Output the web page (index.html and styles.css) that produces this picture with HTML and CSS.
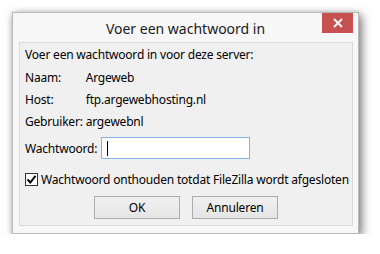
FILE: index.html
```html
<!DOCTYPE html>
<html lang="nl">
<head>
  <meta charset="UTF-8" />
  <title>Voer een wachtwoord in</title>
  <link rel="stylesheet" href="styles.css">
</head>
<body>

<div class="window">
  <div class="titlebar">
    <span class="title">Voer een wachtwoord in</span>
    <button class="close-btn" title="Sluiten">
      <svg width="10" height="10" viewBox="0 0 10 10">
        <path d="M1 1 L9 9 M9 1 L1 9" stroke="#fff" stroke-width="1.8" />
      </svg>
    </button>
  </div>

  <div class="panel">
    <div class="row">Voer een wachtwoord in voor deze server:</div>
    <div class="info">
      <span>Naam:</span><span>Argeweb</span>
      <span>Host:</span><span>ftp.argewebhosting.nl</span>
      <span>Gebruiker:</span><span>argewebnl</span>
    </div>

    <div class="pass-row">
      <label for="pass">Wachtwoord:</label>
      <div class="input" id="pass"><span class="caret"></span></div>
    </div>

    <div class="check-row">
      <span class="checkbox">
        <svg width="11" height="11" viewBox="0 0 11 11">
          <path d="M1.5 5.5 L4.3 8.5 L9.5 1.8" fill="none" stroke="#000" stroke-width="2" />
        </svg>
      </span>
      <span>Wachtwoord onthouden totdat FileZilla wordt afgesloten</span>
    </div>

    <div class="buttons">
      <button class="btn">OK</button>
      <button class="btn">Annuleren</button>
    </div>
  </div>
</div>

</body>
</html>
```

FILE: styles.css
```css
body {
  margin: 0;
  padding: 12px 0 0 12px;
  background: #fff;
  font-family: 'Noto Sans', 'Open Sans', sans-serif;
  font-size: 12px;
  letter-spacing: -0.2px;
  color: #000;
  white-space: nowrap;
}
.window {
  position: relative;
  width: 345px;
  height: 220px;
  background: #f7f7f7;
  border: 1px solid #b9b9b9;
  box-shadow: 3px 3px 9px rgba(0,0,0,0.5), -1px 0 5px rgba(0,0,0,0.12);
  display: flex;
  flex-direction: column;
}
.titlebar {
  height: 29px;
  display: flex;
  justify-content: center;
  align-items: center;
}
.title {
  font-size: 14px;
  letter-spacing: 0;
  color: #1a1a1a;
  margin-top: 1px;
}
.close-btn {
  position: absolute;
  top: 0;
  right: 5px;
  width: 31px;
  height: 20px;
  padding: 0;
  border: none;
  background: #c75050;
  display: flex;
  justify-content: center;
  align-items: center;
}
.panel {
  flex: 1;
  margin: 0 5px 7px 6px;
  background: #f0f0f0;
  border: 1px solid #dadada;
  padding: 1px 5px 0 5px;
}
.row {
  height: 22px;
  line-height: 22px;
}
.info {
  display: grid;
  grid-template-columns: auto 1fr;
  column-gap: 3px;
  grid-auto-rows: 22px;
  align-items: center;
}
.pass-row {
  display: flex;
  align-items: center;
  gap: 4px;
  margin-top: 5px;
}
.pass-row label {
  flex: 0 0 72px;
}
.input {
  width: 142px;
  height: 20px;
  background: #fff;
  border: 1px solid #7eb4ea;
  display: flex;
  align-items: center;
  padding-left: 5px;
}
.caret {
  width: 1px;
  height: 15px;
  background: #000;
}
.check-row {
  display: flex;
  align-items: center;
  gap: 3px;
  margin-top: 9px;
  height: 22px;
}
.checkbox {
  width: 11px;
  height: 11px;
  background: #fff;
  border: 1px solid #333;
  display: flex;
}
.buttons {
  display: flex;
  justify-content: center;
  gap: 12px;
  margin-top: 6px;
}
.btn {
  width: 86px;
  height: 23px;
  font-family: inherit;
  font-size: 12px;
  letter-spacing: -0.2px;
  color: #000;
  border: 1px solid #acacac;
  background: linear-gradient(#f0f0f0, #e5e5e5);
  padding: 0;
}
```
